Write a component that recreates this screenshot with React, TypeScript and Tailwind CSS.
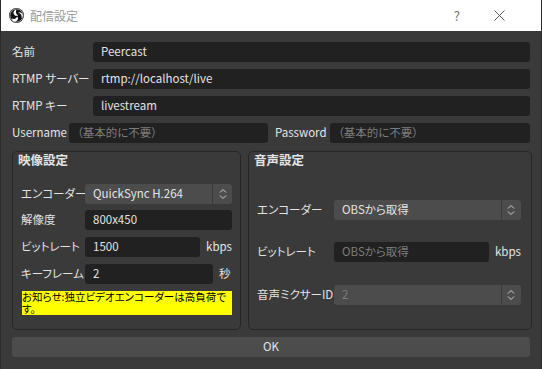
import React from 'react';

const font = "[font-family:'Noto_Sans_CJK_JP','Noto_Sans',sans-serif] [font-feature-settings:'palt']";

const ObsLogo = () => (
  <svg width="15" height="15" viewBox="0 0 100 100">
    <circle cx="50" cy="50" r="50" fill="#111" />
    <circle cx="50" cy="50" r="44" fill="none" stroke="#fff" strokeWidth="4" />
    <path d="M50 12 A20 20 0 1 0 62 48 A24 24 0 0 1 50 12 Z" fill="#fff" />
    <path d="M20 70 A20 20 0 1 0 54 56 A24 24 0 0 1 20 70 Z" fill="#fff" />
    <path d="M82 66 A20 20 0 0 0 60 32 A24 24 0 0 1 82 66 Z" fill="#fff" />
  </svg>
);

const Chevrons = () => (
  <svg width="8" height="12" viewBox="0 0 8 12" fill="none" stroke="#cfcfcf" strokeWidth="1">
    <path d="M1 4.5 L4 1.5 L7 4.5" />
    <path d="M1 7.5 L4 10.5 L7 7.5" />
  </svg>
);

const Input = ({ value, placeholder, className = '' }: { value?: string; placeholder?: string; className?: string }) => (
  <div className={`h-5 bg-[#212121] rounded-[3px] pl-2 flex items-center whitespace-nowrap overflow-hidden ${value ? 'text-[#e4e4e4]' : 'text-[#7d7d7d]'} ${className}`}>
    {value ?? placeholder}
  </div>
);

const Combo = ({ value, disabled, className = '' }: { value: string; disabled?: boolean; className?: string }) => (
  <div className={`h-5 bg-[#4c4c4c] rounded-[3px] flex items-center ${disabled ? 'text-[#7d7d7d]' : 'text-[#e4e4e4]'} ${className}`}>
    <span className="flex-1 pl-2 whitespace-nowrap">{value}</span>
    <div className="w-5 h-full border-l border-[#3a3a3a] flex items-center justify-center">
      <Chevrons />
    </div>
  </div>
);

const Label = ({ children, className = '' }: { children: React.ReactNode; className?: string }) => (
  <span className={`shrink-0 whitespace-nowrap ${className}`}>{children}</span>
);

export default function App() {
  return (
    <div className={`w-[542px] h-[369px] flex flex-col bg-[#3a3a3a] border-x border-[#2b2b2b] text-[11.5px] text-[#e4e4e4] ${font}`}>
      <div className="h-[31px] bg-white flex items-center pl-[8px] pr-[36px] shrink-0">
        <ObsLogo />
        <span className="ml-[6px] text-[#9a9a9a] text-[12px]">配信設定</span>
        <span className="ml-auto text-[#707070] text-[13px]">?</span>
        <svg className="ml-[34px]" width="11" height="11" viewBox="0 0 11 11" stroke="#555" strokeWidth="1">
          <path d="M0.5 0.5 L10.5 10.5 M10.5 0.5 L0.5 10.5" />
        </svg>
      </div>

      <div className="flex-1 flex flex-col px-[11px] pt-[11px] pb-[12px]">
        <div className="flex flex-col gap-[7px]">
          <div className="flex items-center">
            <Label className="w-[81px]">名前</Label>
            <Input value="Peercast" className="flex-1" />
          </div>
          <div className="flex items-center">
            <Label className="w-[81px]">RTMP サーバー</Label>
            <Input value="rtmp://localhost/live" className="flex-1" />
          </div>
          <div className="flex items-center">
            <Label className="w-[81px]">RTMP キー</Label>
            <Input value="livestream" className="flex-1" />
          </div>
          <div className="flex items-center">
            <Label className="w-[57px]">Username</Label>
            <Input placeholder="（基本的に不要）" className="w-[199px]" />
            <Label className="w-[62px] pl-[7px]">Password</Label>
            <Input placeholder="（基本的に不要）" className="flex-1" />
          </div>
        </div>

        <div className="flex gap-[7px] mt-[8px] h-[179px]">
          <div className="w-[229px] border border-[#262626] rounded-[5px] flex flex-col">
            <div className="pl-[5px] pt-[1px] font-bold text-[12.5px] leading-[14px]">映像設定</div>
            <div className="flex flex-col px-[8px] mt-[17px]">
              <div className="flex items-center">
                <Label className="w-[64px]">エンコーダー</Label>
                <Combo value="QuickSync H.264" className="flex-1" />
              </div>
              <div className="flex items-center mt-[6px]">
                <Label className="w-[64px]">解像度</Label>
                <Input value="800x450" className="flex-1" />
              </div>
              <div className="flex items-center mt-[7px]">
                <Label className="w-[64px]">ビットレート</Label>
                <Input value="1500" className="w-[116px]" />
                <Label className="ml-[6px]">kbps</Label>
              </div>
              <div className="flex items-center mt-[7px]">
                <Label className="w-[64px]">キーフレーム</Label>
                <Input value="2" className="w-[128px]" />
                <Label className="ml-[6px]">秒</Label>
              </div>
              <div className="mt-[7px] ml-[1px] h-[24px] bg-[#ffff00] text-black text-[10.5px] leading-[12px] whitespace-nowrap">
                お知らせ:独立ビデオエンコーダーは高負荷で<br />す。
              </div>
            </div>
          </div>

          <div className="flex-1 border border-[#262626] rounded-[5px] flex flex-col">
            <div className="pl-[5px] pt-[1px] font-bold text-[12.5px] leading-[14px]">音声設定</div>
            <div className="flex flex-col pl-[8px] pr-[10px] mt-[33px]">
              <div className="flex items-center">
                <Label className="w-[77px]">エンコーダー</Label>
                <Combo value="OBSから取得" className="flex-1" />
              </div>
              <div className="flex items-center mt-[22px]">
                <Label className="w-[77px]">ビットレート</Label>
                <Input placeholder="OBSから取得" className="w-[155px]" />
                <Label className="ml-[6px]">kbps</Label>
              </div>
              <div className="flex items-center mt-[23px]">
                <Label className="w-[77px]">音声ミクサーID</Label>
                <Combo value="2" disabled className="flex-1" />
              </div>
            </div>
          </div>
        </div>

        <div className="mt-[7px] h-5 bg-[#4c4c4c] rounded-[3px] flex items-center justify-center">OK</div>
      </div>
    </div>
  );
}
